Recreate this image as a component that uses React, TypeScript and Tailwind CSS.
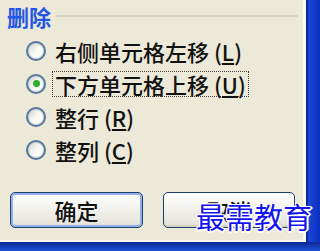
import React from "react";

const font = { fontFamily: '"Noto Sans CJK SC", "Noto Sans", sans-serif' };

export default function App() {
  return (
    <div
      className="relative flex h-[251px] w-[320px] flex-col overflow-hidden bg-[#ece9d8] text-[#111]"
      style={font}
    >
      <div className="flex h-[242px]">
        <div className="flex w-[303px] flex-col">
          {/* group header */}
          <div className="flex h-[32px] items-center pl-[7px] pr-[5px]">
            <span className="text-[22px] font-bold leading-none text-[#2456e4]">删除</span>
            <div className="ml-[5px] h-[2px] flex-1 bg-[#d6d2c2]" />
          </div>

          <div className="mt-[2px] flex flex-col">
            <Option label="右侧单元格左移" hotkey="L" />
            <Option label="下方单元格上移" hotkey="U" checked />
            <Option label="整行" hotkey="R" />
            <Option label="整列" hotkey="C" />
          </div>

          <div className="mt-[26px] flex pl-[10px]">
            <Button isDefault className="w-[133px]">
              确定
            </Button>
            <Button className="ml-[20px] w-[132px]">取消</Button>
          </div>

          <div className="mt-auto h-[2px] bg-[#f8f6ee]" />
        </div>

        {/* window frame, right */}
        <div className="w-[3px] bg-[#faf8f0]" />
        <div className="w-[2px] bg-[#0a2a9a]" />
        <div className="w-[12px] bg-gradient-to-r from-[#1a46d8] to-[#0c30c0]" />
      </div>

      {/* window frame, bottom */}
      <div className="h-[9px] bg-gradient-to-b from-[#0a2890] to-[#2251dc]" />

      {/* watermark */}
      <div className="absolute left-[196px] top-[202px] text-[29px] leading-none text-[#1414f0] [text-shadow:1px_1px_0_#fff,-1px_-1px_0_#fff,1px_-1px_0_#fff,-1px_1px_0_#fff,0_2px_0_#fff,2px_0_0_#fff]">
        最需教育
      </div>
    </div>
  );
}

function Option({
  label,
  hotkey,
  checked = false,
}: {
  label: string;
  hotkey: string;
  checked?: boolean;
}) {
  return (
    <div className="flex h-[33px] items-center pl-[26px]">
      <span className="flex h-[20px] w-[20px] items-center justify-center rounded-full border-[2px] border-[#56779a] bg-gradient-to-br from-[#d4d4cc] via-[#f8f8f4] to-white shadow-[inset_0_0_0_1px_#c8d2dc]">
        {checked && <span className="h-[7px] w-[7px] rounded-full bg-[#2eae2e]" />}
      </span>
      <span
        className={`ml-[6px] flex h-[26px] items-center whitespace-nowrap border px-[2px] text-[22px] font-medium leading-none ${
          checked ? "border-dotted border-[#404040]" : "border-transparent"
        }`}
      >
        {label}
        <span className="ml-[5px]">
          (<span className="underline">{hotkey}</span>)
        </span>
      </span>
    </div>
  );
}

function Button({
  children,
  className = "",
  isDefault = false,
}: {
  children: React.ReactNode;
  className?: string;
  isDefault?: boolean;
}) {
  return (
    <button
      className={`flex h-[36px] items-center justify-center rounded-[5px] border border-[#1e3f6e] bg-gradient-to-b from-white to-[#e4e2d8] text-[22px] font-medium leading-none ${
        isDefault ? "shadow-[inset_0_0_0_2px_#8fb0ea]" : "shadow-[inset_0_-2px_0_#d6d2c2]"
      } ${className}`}
    >
      {children}
    </button>
  );
}
